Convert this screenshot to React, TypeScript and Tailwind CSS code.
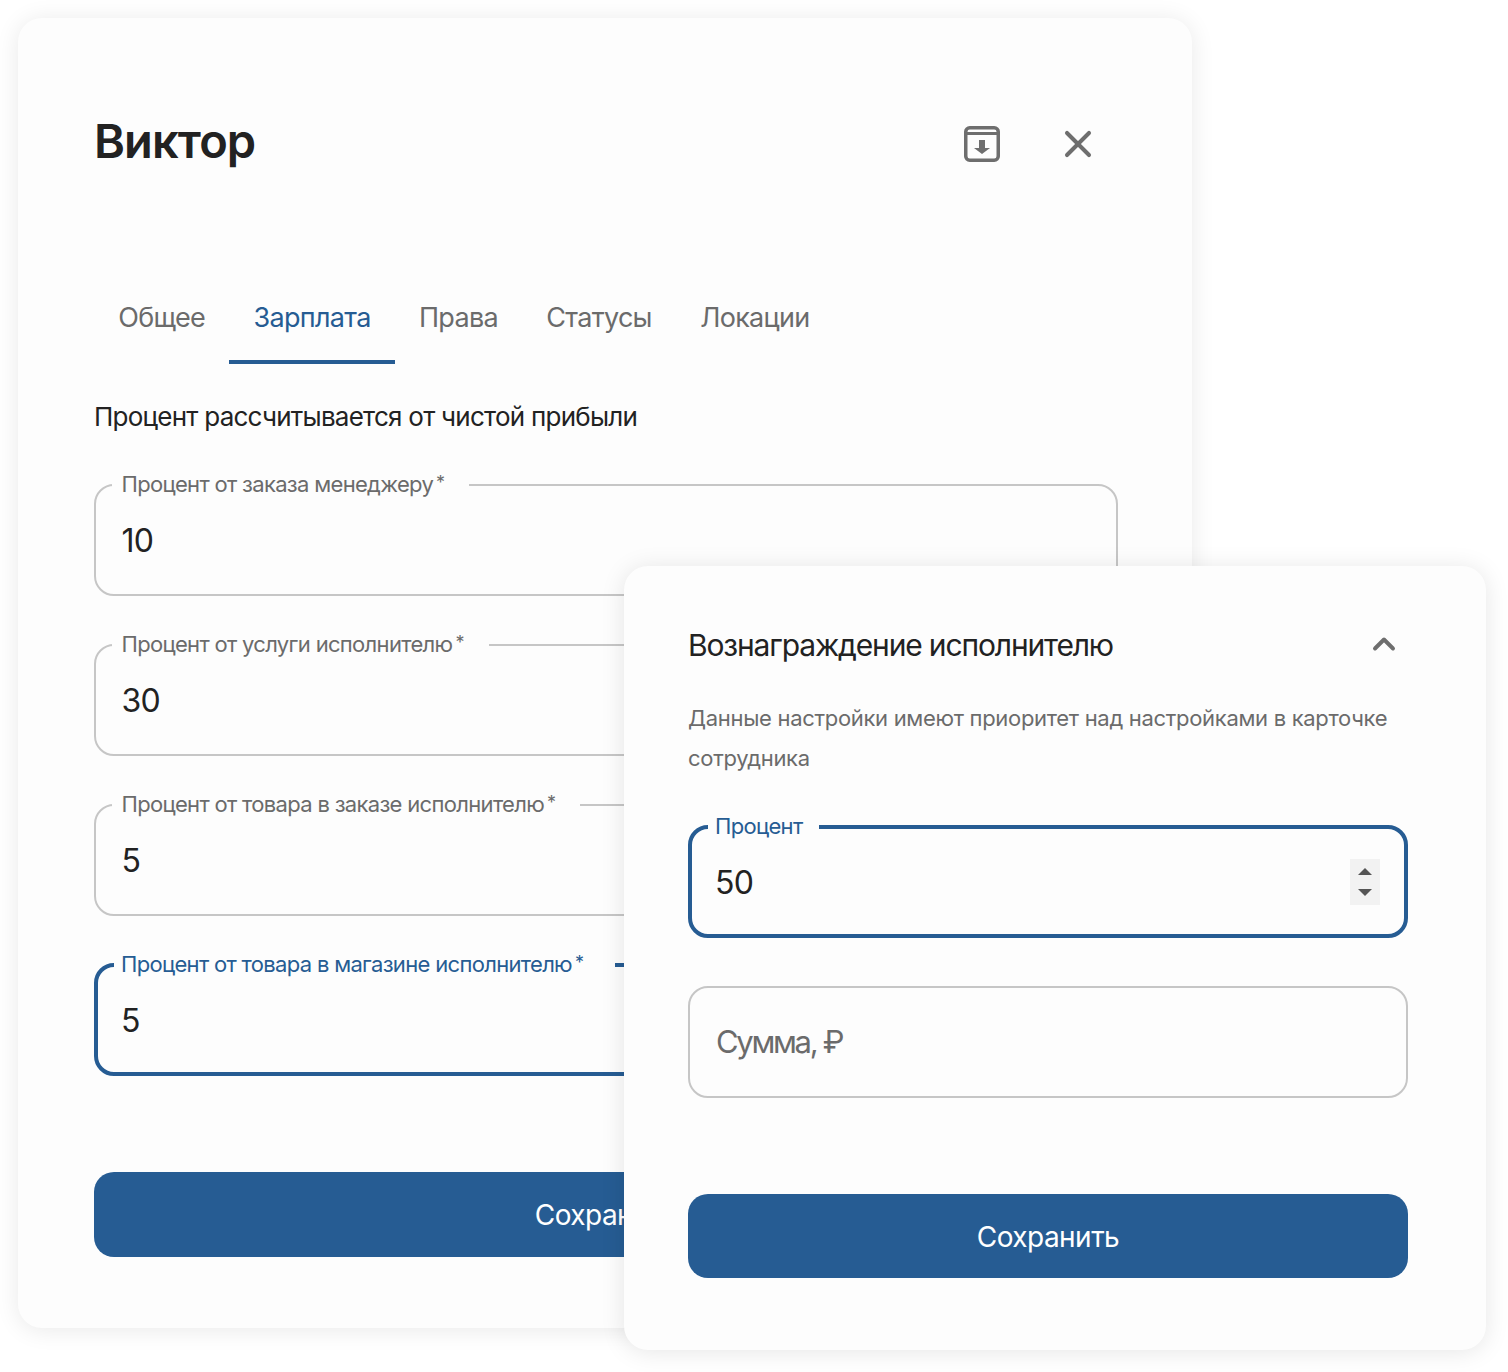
import { X, ChevronUp } from "lucide-react";

const font = { fontFamily: "Inter, 'Noto Sans', sans-serif" };

interface FieldProps {
  label: string;
  value: string;
  required?: boolean;
  focused?: boolean;
}

function Field({ label, value, required, focused }: FieldProps) {
  return (
    <fieldset
      className={`h-[124px] min-w-0 rounded-[20px] pr-[26px] ${
        focused ? "border-4 border-[#265c93] pl-[23px]" : "border-2 border-[#c6c6c6] pl-[25.5px]"
      }`}
    >
      <legend
        className={`h-[26px] text-[22px] leading-[24px] tracking-[-0.68px] ${
          focused ? "-ml-[7px] pl-[7px] text-[#265c93]" : "-ml-[10px] pl-[10px] text-[#6b6b6b]"
        } ${required ? (focused ? "pr-[32px]" : "pr-[25px]") : "pr-[17px]"}`}
      >
        {label}
        {required && <span className="relative top-[-3px] ml-[3px] text-[18px]">*</span>}
      </legend>
      <div className="pt-[23px] text-[32px] leading-[40px] tracking-[-0.8px] text-[#222222]">{value}</div>
    </fieldset>
  );
}

function ArchiveIcon() {
  return (
    <svg width="38" height="38" viewBox="0 0 38 38" fill="none">
      <rect x="2.75" y="2.75" width="32.5" height="32.5" rx="4" stroke="#6e6e6e" strokeWidth="3.5" />
      <path d="M3 8.5H35" stroke="#6e6e6e" strokeWidth="3" />
      <path d="M16 15H22V23H27L19 29L11 23H16Z" fill="#6e6e6e" />
    </svg>
  );
}

const tabs = ["Общее", "Зарплата", "Права", "Статусы", "Локации"];

export default function App() {
  return (
    <div style={font} className="relative h-[1372px] w-[1508px] overflow-hidden bg-white">
      {/* main card */}
      <div className="absolute left-[18px] top-[18px] h-[1310px] w-[1174px] rounded-[24px] bg-[#fdfdfd] pl-[76px] pr-[74px] pt-[92px] shadow-[0_2px_24px_rgba(0,0,0,0.09)]">
        <div className="flex h-[64px] items-center justify-between">
          <h1 className="pb-[2px] text-[47px] font-semibold leading-[62px] tracking-[-0.9px] text-[#222222]">Виктор</h1>
          <div className="mr-[18px] mt-[4px] flex items-center gap-[55px]">
            <ArchiveIcon />
            <X size={44} strokeWidth={2.2} className="text-[#6e6e6e]" />
          </div>
        </div>

        <div className="mt-[104px] flex">
          {tabs.map((tab, i) => (
            <div
              key={tab}
              className={`flex h-[86px] items-center border-b-4 px-[24.2px] pb-[2px] text-[27px] tracking-[-0.7px] ${
                i === 1 ? "border-[#265c93] text-[#265c93]" : "border-transparent text-[#6b6b6b]"
              }`}
            >
              {tab}
            </div>
          ))}
        </div>

        <p className="mt-[36px] text-[26px] leading-[34px] tracking-[-0.76px] text-[#222222]">
          Процент рассчитывается от чистой прибыли
        </p>

        <div className="mt-[38px] flex flex-col gap-[36px]">
          <Field label="Процент от заказа менеджеру" value="10" required />
          <Field label="Процент от услуги исполнителю" value="30" required />
          <Field label="Процент от товара в заказе исполнителю" value="5" required />
          <Field label="Процент от товара в магазине исполнителю" value="5" required focused />
        </div>

        <button className="mt-[96px] flex h-[85px] w-full items-center justify-center rounded-[20px] bg-[#265c93] text-[28px] tracking-[-0.55px] text-white">
          Сохранить
        </button>
      </div>

      {/* reward popup */}
      <div className="absolute left-[624px] top-[566px] h-[784px] w-[862px] rounded-[24px] bg-[#fdfdfd] pl-[64px] pr-[78px] pt-[56px] shadow-[0_2px_24px_rgba(0,0,0,0.1)]">
        <div className="flex h-[48px] items-center justify-between">
          <h2 className="pb-[2px] text-[30px] leading-[46px] tracking-[-1.15px] text-[#222222]">Вознаграждение исполнителю</h2>
          <ChevronUp size={36} strokeWidth={2.6} className="mb-[4px] mr-[6px] text-[#6e6e6e]" />
        </div>
        <p className="mt-[28px] text-[22px] leading-[40px] tracking-[-0.31px] text-[#6b6b6b]">
          Данные настройки имеют приоритет над настройками в карточке сотрудника
        </p>

        <div className="relative mt-[36px]">
          <Field label="Процент" value="50" focused />
          <div className="absolute left-[662px] top-[45px] flex h-[46px] w-[30px] flex-col items-center justify-center gap-[14px] bg-[#f2f2f2]">
            <span className="h-0 w-0 border-x-[7px] border-b-[7px] border-x-transparent border-b-[#555555]" />
            <span className="h-0 w-0 border-x-[7px] border-t-[7px] border-x-transparent border-t-[#555555]" />
          </div>
        </div>

        <div className="mt-[48px] flex h-[112px] items-center rounded-[20px] border-2 border-[#c6c6c6] px-[26px] text-[31px] tracking-[-2.3px] text-[#6b6b6b]">
          Сумма, ₽
        </div>

        <button className="mt-[96px] flex h-[84px] w-full items-center justify-center rounded-[20px] bg-[#265c93] pt-[1px] text-[28px] tracking-[-0.55px] text-white">
          Сохранить
        </button>
      </div>
    </div>
  );
}
